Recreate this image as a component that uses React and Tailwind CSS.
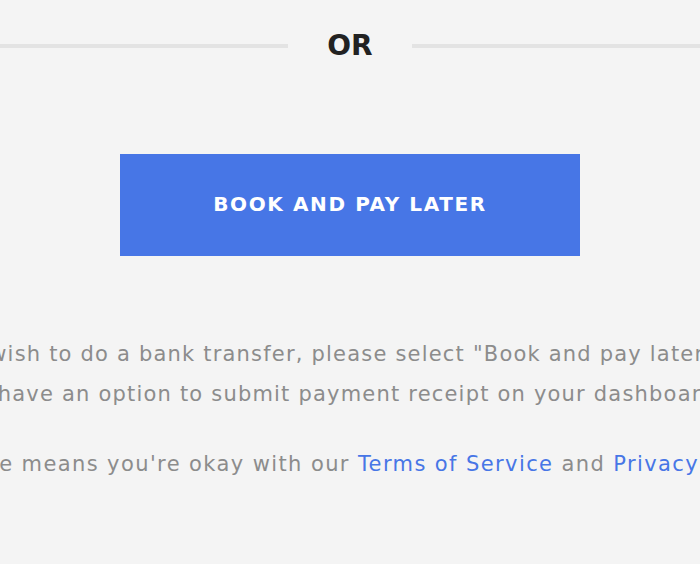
import React from 'react';

const App = () => {
    return (
        <div className="h-[564px] w-full overflow-hidden bg-[#f4f4f4] font-['DejaVu_Sans',sans-serif]">
            <div className="flex h-[92px] items-center">
                <div className="h-1 flex-1 bg-[#e3e3e3]" />
                <span className="w-[124px] text-center text-[28px] font-bold text-[#222222]">OR</span>
                <div className="h-1 flex-1 bg-[#e3e3e3]" />
            </div>

            <button className="mx-auto mt-[62px] flex h-[102px] w-[460px] items-center justify-center bg-[#4776e6] pb-[3px] text-[20px] font-bold tracking-[1.6px] text-white">
                BOOK AND PAY LATER
            </button>

            <div className="mt-[78px] flex flex-col items-center text-[21px] leading-[40px] tracking-[1.2px] text-[#8c8c8c]">
                <p className="mr-[14px] whitespace-nowrap">If you wish to do a bank transfer, please select "Book and pay later". You</p>
                <p className="mr-[26px] whitespace-nowrap">will have an option to submit payment receipt on your dashboard.</p>
                <p className="mr-[12px] mt-[30px] whitespace-nowrap tracking-[1.4px]">
                    Purchase means you're okay with our{' '}
                    <a href="#" className="text-[#4776e6]">Terms of Service</a> and{' '}
                    <a href="#" className="text-[#4776e6]">Privacy Policy</a>.
                </p>
            </div>
        </div>
    );
};

export default App;
